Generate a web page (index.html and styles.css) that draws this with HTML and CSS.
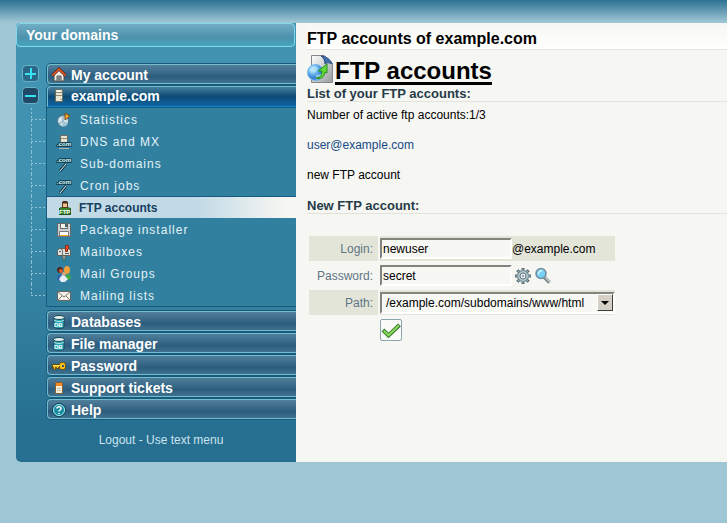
FILE: index.html
```html
<!DOCTYPE html>
<html lang="en">
<head>
    <meta charset="UTF-8">
    <meta name="viewport" content="width=device-width, initial-scale=1.0">
    <title>FTP accounts of example.com</title>
    <link rel="stylesheet" href="styles.css">
</head>
<body>
    <div class="page">
        <div class="sidebar">
            <h2 class="sidebar-title">Your domains</h2>

            <ul class="nav">
                <li class="group">
                    <button type="button" class="toggle" aria-label="Expand My account">
                        <svg width="11" height="11" viewBox="0 0 11 11"><path d="M0 5h11v2H0zM5 0h2v11H5z" fill="#35e3f2"/></svg>
                    </button>
                    <a href="#" class="head">
                        <svg class="icon" viewBox="0 0 16 16"><path d="M3 8v6h10V8L8 3z" fill="#f3efe6" stroke="#4a4a48"/><path d="M6 14V9h4v5" fill="#a9b2ae" stroke="#555"/><path d="M8 10v4" stroke="#4c555b"/><path d="M1.500 8.500L8 2l6.500 6.500" fill="none" stroke="#5c1c10" stroke-width="3"/><path d="M1.500 8.500L8 2l6.500 6.500" fill="none" stroke="#f0622c" stroke-width="1.500"/></svg>
                        My account
                    </a>
                </li>
                <li class="group">
                    <button type="button" class="toggle open" aria-label="Collapse example.com">
                        <svg width="11" height="11" viewBox="0 0 11 11"><path d="M0 5h11v2H0z" fill="#35e3f2"/></svg>
                    </button>
                    <a href="#" class="head current">
                        <svg class="icon" viewBox="0 0 16 16"><path d="M4.500 1.500h7v12h-7z" fill="#e8e5d2" stroke="#6c6b5c"/><path d="M5 4.500h6M5 7.500h6" stroke="#8f8d7a"/><path d="M6 3h3" stroke="#fff"/><path d="M9 11.500h2" stroke="#aaa793"/></svg>
                        example.com
                    </a>
                </li>
                <li>
                    <ul class="submenu">
                        <li><a href="#">
                            <svg class="icon" viewBox="0 0 16 16"><circle cx="7" cy="9" r="5.500" fill="#d5e8ef" stroke="#4b7189"/><path d="M7 9l5 2-2 3-4 1z" fill="#9fc5d6"/><path d="M7 3v6l-4 3" fill="none" stroke="#7396a7"/><path d="M9 7V1l5 3-5 4z" fill="#f6a92e" stroke="#71491b"/></svg>
                            Statistics</a></li>
                        <li><a href="#">
                            <svg class="icon" viewBox="0 0 16 16"><path d="M4.500 1.500h7v7h-7z" fill="#e6e3d3" stroke="#6d6c60"/><path d="M5 4.500h6" stroke="#918e7c"/><path d="M3 14.500h10" stroke="#b9b6a5"/><text class="com" x="1" y="12">.com</text></svg>
                            DNS and MX</a></li>
                        <li><a href="#">
                            <svg class="icon" viewBox="0 0 16 16"><path d="M4 15l6-7" stroke="#174052" stroke-width="3"/><path d="M4 15l6-7" stroke="#e8eee9" stroke-width="1"/><text class="com" x="1" y="6">.com</text></svg>
                            Sub-domains</a></li>
                        <li><a href="#">
                            <svg class="icon" viewBox="0 0 16 16"><path d="M4 15l6-7" stroke="#174052" stroke-width="3"/><path d="M4 15l6-7" stroke="#e8eee9" stroke-width="1"/><text class="com" x="1" y="6">.com</text></svg>
                            Cron jobs</a></li>
                        <li class="selected"><a href="#">
                            <svg class="icon" viewBox="0 0 16 16"><path d="M3.500 8.500l2-1h6l3 1v6h-11z" fill="#39872b" stroke="#1d4c19"/><path d="M6.500 2.500h5v5h-5z" fill="#f0c290" stroke="#5d3923"/><path d="M6 3.500V2l1.500-1h3L12 2v1.500z" fill="#4a2b1d"/><text class="ftp" x="3" y="14">FTP</text></svg>
                            FTP accounts</a></li>
                        <li><a href="#">
                            <svg class="icon" viewBox="0 0 16 16"><path d="M1.500 1.500h12l1 1v12h-13z" fill="#cbd2d3" stroke="#68675f"/><path d="M4.500 1.500h7v5h-7z" fill="#f4f4ed" stroke="#68675f"/><path d="M9 2h2v3H9z" fill="#46606d"/><path d="M3.500 9.500h9v5h-9z" fill="#fff" stroke="#777"/><path d="M4 13h8v1H4z" fill="#f69b24"/></svg>
                            Package installer</a></li>
                        <li><a href="#">
                            <svg class="icon" viewBox="0 0 16 16"><path d="M7 11h2v4H7z" fill="#e0ddcc" stroke="#675d51"/><path d="M1.500 11.500v-5l2-2h9l2 2v5z" fill="#dde1dc" stroke="#625f56"/><path d="M6.500 11V6l-2-1" fill="none" stroke="#77736a"/><path d="M3 7.500h2M9 9.500h4" stroke="#4f5b61"/><path d="M9.500 7.500v-6h3V5h-1v2.500z" fill="#e94d26" stroke="#8d2716"/></svg>
                            Mailboxes</a></li>
                        <li><a href="#">
                            <svg class="icon" viewBox="0 0 16 16"><circle cx="4" cy="4" r="3" fill="#4f291d"/><circle cx="5" cy="5" r="2" fill="#d95c29"/><path d="M1 13c0-5 6-6 7-1v2H2z" fill="#2861ad"/><path d="M9 13c0-6 6-6 6-1l-2 2z" fill="#39a845"/><ellipse cx="11" cy="4" rx="3" ry="4" fill="#f1a13c"/><circle cx="8" cy="8" r="2" fill="#d9a77c"/><path d="M3 13l3-4 3 1 3 3-3 3H5z" fill="#e6edf7"/></svg>
                            Mail Groups</a></li>
                        <li><a href="#">
                            <svg class="icon" viewBox="0 0 16 16"><path d="M1.500 3.500h13v9h-13z" fill="#f4f2e8" stroke="#69665c"/><path d="M2 4l6 5 6-5M2 12l4-4M14 12l-4-4" fill="none" stroke="#7c796d"/></svg>
                            Mailing lists</a></li>
                    </ul>
                </li>
                <li class="group">
                    <a href="#" class="head">
                        <svg class="icon" viewBox="0 0 16 16"><path d="M3 4v9c1 2 9 2 10 0V4z" fill="#25a7b5" stroke="#174b5c"/><ellipse cx="8" cy="3.500" rx="5.500" ry="2" fill="#e2eeeb" stroke="#174b5c"/><path d="M3 6c2 2 8 2 10 0" fill="none" stroke="#bbe7e3"/><text class="db" x="3" y="13">DB</text></svg>
                        Databases
                    </a>
                </li>
                <li class="group">
                    <a href="#" class="head">
                        <svg class="icon" viewBox="0 0 16 16"><path d="M3 4v9c1 2 9 2 10 0V4z" fill="#25a7b5" stroke="#174b5c"/><ellipse cx="8" cy="3.500" rx="5.500" ry="2" fill="#e2eeeb" stroke="#174b5c"/><path d="M3 6c2 2 8 2 10 0" fill="none" stroke="#bbe7e3"/><text class="db" x="3" y="13">DB</text></svg>
                        File manager
                    </a>
                </li>
                <li class="group">
                    <a href="#" class="head">
                        <svg class="icon" viewBox="0 0 16 16"><path d="M9 6.500H1.500v3h1v2h2v-2h1v1h2v-1H9" fill="#f9bd13" stroke="#684d12"/><rect x="8.500" y="4.500" width="6" height="7" rx="2" fill="#f9bd13" stroke="#684d12"/><path d="M11 7h2v2h-2z" fill="#315d76"/><path d="M2 7.500h7" stroke="#ffe45b"/></svg>
                        Password
                    </a>
                </li>
                <li class="group">
                    <a href="#" class="head">
                        <svg class="icon" viewBox="0 0 16 16"><path d="M4.500 2.500h7v11h-7z" fill="#f3efda" stroke="#81603a"/><path d="M5 3h6v3H5z" fill="#f38b20"/><path d="M6 8.500h4M6 10.500h4" stroke="#c8c2a8"/></svg>
                        Support tickets
                    </a>
                </li>
                <li class="group">
                    <a href="#" class="head">
                        <svg class="icon" viewBox="0 0 16 16"><circle cx="8" cy="8" r="6.500" fill="#168ba2" stroke="#123e51"/><circle cx="8" cy="8" r="5.500" fill="none" stroke="#a6edf0"/><path d="M6 6.500C6 4 10 4 10 6.500 10 8 8 8 8 9.500M8 11v1" fill="none" stroke="#fff" stroke-width="1.500"/></svg>
                        Help
                    </a>
                </li>
            </ul>

            <p class="sidebar-foot"><a href="#">Logout</a> - <a href="#">Use text menu</a></p>
        </div>

        <div class="content">
            <h2 class="page-title">FTP accounts of example.com</h2>

            <div class="module">
                <svg width="28" height="28" viewBox="0 0 28 28">
                    <defs>
                        <linearGradient id="paper" x1="0" y1="0" x2="1" y2="1"><stop offset="0" stop-color="#fff"/><stop offset="1" stop-color="#979b9d"/></linearGradient>
                        <radialGradient id="globe" cx=".35" cy=".3"><stop offset="0" stop-color="#d2f1ff"/><stop offset=".5" stop-color="#7cc3f4"/><stop offset="1" stop-color="#3d86d8"/></radialGradient>
                    </defs>
                    <path d="M4.500.500H17l8.500 8v19h-21z" fill="url(#paper)" stroke="#85898d"/>
                    <path d="M14 1c5 0 10 4 11 8-3-2-6-1-7 0 0-3-1-6-4-8z" fill="#416fab" stroke="#234d83"/>
                    <circle cx="8.500" cy="17.500" r="8" fill="url(#globe)" stroke="#74b8e8"/>
                    <path d="M2 15l5-4 4 2-3 4-4 1zM9 20l6-1-3 5-3 1z" fill="#b3e5f8" opacity=".7"/>
                    <path d="M9 23c5 0 6-4 6-7h-4l9-7v9l-2-1c-1 5-4 8-9 6z" fill="#62db36" stroke="#258e22"/>
                </svg>
                <h1>FTP accounts</h1>
            </div>

            <h3>List of your FTP accounts:</h3>
            <p>Number of active ftp accounts:1/3</p>
            <p><a href="#" class="account">user@example.com</a></p>
            <p>new FTP account</p>

            <h3>New FTP account:</h3>
            <form>
                <table class="form-table">
                    <tr class="odd">
                        <th><label for="login">Login:</label></th>
                        <td><div class="field"><input type="text" id="login" name="login" value="newuser">@example.com</div></td>
                    </tr>
                    <tr>
                        <th><label for="password">Password:</label></th>
                        <td>
                            <div class="field">
                                <input type="text" id="password" name="password" value="secret">
                                <button type="button" class="tool" aria-label="Generate password">
                                    <svg width="18" height="18" viewBox="0 0 18 18"><path d="M9 1v16M1 9h16M3.300 3.300l11.400 11.400M14.700 3.300L3.300 14.700" stroke="#566d76" stroke-width="3"/><circle cx="9" cy="9" r="5.500" fill="#b8c9ce" stroke="#657f89"/><path d="M9 2v2M9 14v2M2 9h2M14 9h2M4 4l1 1M13 13l1 1M14 4l-1 1M4 14l1-1" stroke="#a5b9c0"/><circle cx="9" cy="9" r="3" fill="#eef2f0" stroke="#5b747f"/><circle cx="9" cy="9" r="1" fill="#71868f"/></svg>
                                </button>
                                <button type="button" class="tool" aria-label="Show password">
                                    <svg width="18" height="18" viewBox="0 0 18 18"><path d="M10 10l5.500 5.500" stroke="#7b888c" stroke-width="3.500"/><path d="M11 10l5 5" stroke="#c4cccc" stroke-width="1.500"/><circle cx="7" cy="6.500" r="5" fill="#76cff4" stroke="#718e9d" stroke-width="1.500"/><path d="M4.500 7.500c0-3 2-4 4-4" fill="none" stroke="#d1f4ff" stroke-width="1.500"/></svg>
                                </button>
                            </div>
                        </td>
                    </tr>
                    <tr class="odd">
                        <th><label for="path">Path:</label></th>
                        <td>
                            <div class="select-box">
                                <select id="path" name="path">
                                    <option>/example.com/subdomains/www/html</option>
                                </select>
                            </div>
                        </td>
                    </tr>
                    <tr>
                        <th></th>
                        <td>
                            <button type="submit" class="submit" aria-label="Create account">
                                <svg width="20" height="20" viewBox="0 0 20 20"><path d="M2 10l5.500 5.500L18.500 5" fill="none" stroke="#36782b" stroke-width="4"/><path d="M2.700 10.700l4.800 4.600L17.800 5.600" fill="none" stroke="#8bdc5d" stroke-width="2"/></svg>
                            </button>
                        </td>
                    </tr>
                </table>
            </form>
        </div>
    </div>
</body>
</html>
```
FILE: styles.css
```css
body {
    margin: 0;
    padding: 23px 0 0 16px;
    background: #9ec6d4 linear-gradient(#2c7093, #9ec6d4) repeat-x;
    background-size: 100% 22px;
    font-family: "Liberation Sans", Arial, sans-serif;
    font-size: 12px;
    line-height: 16px;
    color: #000;
}

h1, h2, h3, p, ul {
    margin: 0;
    padding: 0;
}

ul {
    list-style: none;
}

a {
    color: inherit;
    text-decoration: none;
}

button {
    padding: 0;
    cursor: pointer;
}

svg {
    display: block;
    flex: none;
}

.page {
    display: flex;
}

/* sidebar */
.sidebar {
    box-sizing: border-box;
    flex: none;
    width: 280px;
    padding-bottom: 14px;
    background: linear-gradient(#4293b1 0%, #4092b0 35%, #266f91 92%);
    border-radius: 4px 0 0 5px;
    overflow: hidden;
}

.sidebar-title {
    box-sizing: border-box;
    height: 24px;
    margin-right: 1px;
    padding-left: 9px;
    border: 1px solid #82d9e6;
    border-radius: 4px;
    background: linear-gradient(#70aec4, #4d91ac 60%, #46a5bf);
    font-size: 14px;
    line-height: 22px;
    color: #fff;
}

.nav {
    margin-top: 16px;
}

.group {
    display: grid;
    grid-template-columns: 25px 1fr;
    padding-left: 6px;
    height: 22px;
}

.toggle {
    display: flex;
    align-items: center;
    justify-content: center;
    width: 17px;
    height: 17px;
    margin-top: 2px;
    border: 1px solid #67b2c8;
    border-radius: 4px;
    background: #2b6888;
}

.toggle.open {
    background: #204968;
}

.head {
    grid-column: 2;
    display: flex;
    align-items: center;
    gap: 4px;
    box-sizing: border-box;
    height: 20px;
    margin-top: 1px;
    padding: 2px 0 0 3px;
    border: 1px solid #75bbce;
    border-right: 0;
    border-radius: 4px 0 0 4px;
    box-shadow: 0 0 0 1px #175a7c;
    background: linear-gradient(#507f9b, #2c5d7e 65%, #3f7290);
    font-size: 14px;
    font-weight: bold;
    color: #fff;
}

.head.current {
    height: 21px;
    padding: 0 0 1px 3px;
    border-bottom-color: #0f87d1;
    border-bottom-left-radius: 0;
    background: linear-gradient(#46809f, #0d4a75 50%, #0d64a2);
}

.icon {
    width: 16px;
    height: 16px;
}

.icon text {
    font-family: "Liberation Sans", Arial, sans-serif;
    font-size: 6px;
    font-weight: bold;
    letter-spacing: normal;
    fill: #fff;
}

.icon .com {
    fill: #d5fff8;
    stroke: #174052;
    stroke-width: 2px;
    paint-order: stroke;
}

.submenu {
    margin-left: 15px;
    padding: 1px 0 4px;
}

.submenu li {
    height: 22px;
    padding-left: 15px;
    background:
        repeating-linear-gradient(#8fc3d3 0 2px, transparent 2px 4px) 0 0 / 1px 22px no-repeat,
        repeating-linear-gradient(90deg, #8fc3d3 0 2px, transparent 2px 4px) 0 11px / 15px 1px no-repeat;
}

.submenu li:last-child {
    background-size: 1px 11px, 15px 1px;
}

.submenu a {
    display: flex;
    align-items: center;
    gap: 8px;
    box-sizing: border-box;
    height: 22px;
    padding: 2px 0 0 9px;
    border-left: 1px solid #155b83;
    background: #3280a0;
    letter-spacing: 1px;
    color: #e2f2f6;
}

.submenu li:last-child a {
    box-shadow: 0 1px #175a7c;
}

.submenu .selected a {
    gap: 7px;
    padding-top: 0;
    border-top: 1px solid #155b83;
    background: linear-gradient(90deg, #c1dae6 0%, #c1dae6 60%, #f6f6f2 95%);
    font-weight: bold;
    letter-spacing: normal;
    color: #173e5f;
}

.sidebar-foot {
    margin-top: 12px;
    padding-left: 10px;
    text-align: center;
    color: #cbe4ed;
}

/* content */
.content {
    flex: 1;
    min-width: 0;
    padding-left: 11px;
    background: #f6f6f2;
}

.page-title {
    padding-top: 6px;
    border-bottom: 1px solid #e2e3dc;
    background: linear-gradient(#f6f6f2, #fff);
    font-size: 16px;
    line-height: 20px;
}

.module {
    display: flex;
    align-items: flex-end;
    height: 35px;
}

.module svg {
    margin-bottom: 2px;
}

.module h1 {
    font-size: 24px;
    line-height: 28px;
    text-decoration: underline;
    text-decoration-thickness: 3px;
    text-underline-offset: 3px;
}

h3 {
    padding-top: 2px;
    border-bottom: 1px solid #e2e3dc;
    font-size: 13px;
    line-height: 14px;
    color: #263b49;
}

.content p {
    margin: 5px 0 14px;
}

.account {
    color: #174a86;
}

/* new account form */
.form-table {
    margin-top: 20px;
    border-spacing: 2px;
}

.form-table th,
.form-table td {
    height: 25px;
    padding: 0;
}

.form-table th {
    width: 64px;
    padding-right: 5px;
    font-weight: normal;
    text-align: right;
    color: #607583;
}

.odd th,
.odd td {
    background: #e3e5d9;
}

.field {
    display: flex;
    align-items: center;
}

.field input,
.select-box select {
    box-sizing: border-box;
    height: 21px;
    margin: 0;
    border: 2px solid;
    border-color: #84847e #fff #fff #84847e;
    background: #f7f7f3;
    font: inherit;
    color: #000;
}

.field input {
    width: 132px;
    padding: 0 1px;
}

.tool {
    margin-left: 2px;
    border: 0;
    background: none;
}

.select-box {
    position: relative;
    width: 235px;
}

.select-box select {
    display: block;
    width: 100%;
    height: 22px;
    padding: 0 18px 0 4px;
    border-radius: 0;
    appearance: none;
}

.select-box::before {
    content: "";
    position: absolute;
    top: 2px;
    right: 2px;
    box-sizing: border-box;
    width: 16px;
    height: 17px;
    border: 1px solid;
    border-color: #fff #404040 #404040 #fff;
    background: #d4d0c8;
    pointer-events: none;
}

.select-box::after {
    content: "";
    position: absolute;
    top: 9px;
    right: 6px;
    border: 4px solid transparent;
    border-top-color: #000;
    border-bottom: 0;
    pointer-events: none;
}

.submit {
    display: block;
    border: 1px solid #8aa5af;
    border-radius: 2px;
    background: #fbfbf9;
}
```
